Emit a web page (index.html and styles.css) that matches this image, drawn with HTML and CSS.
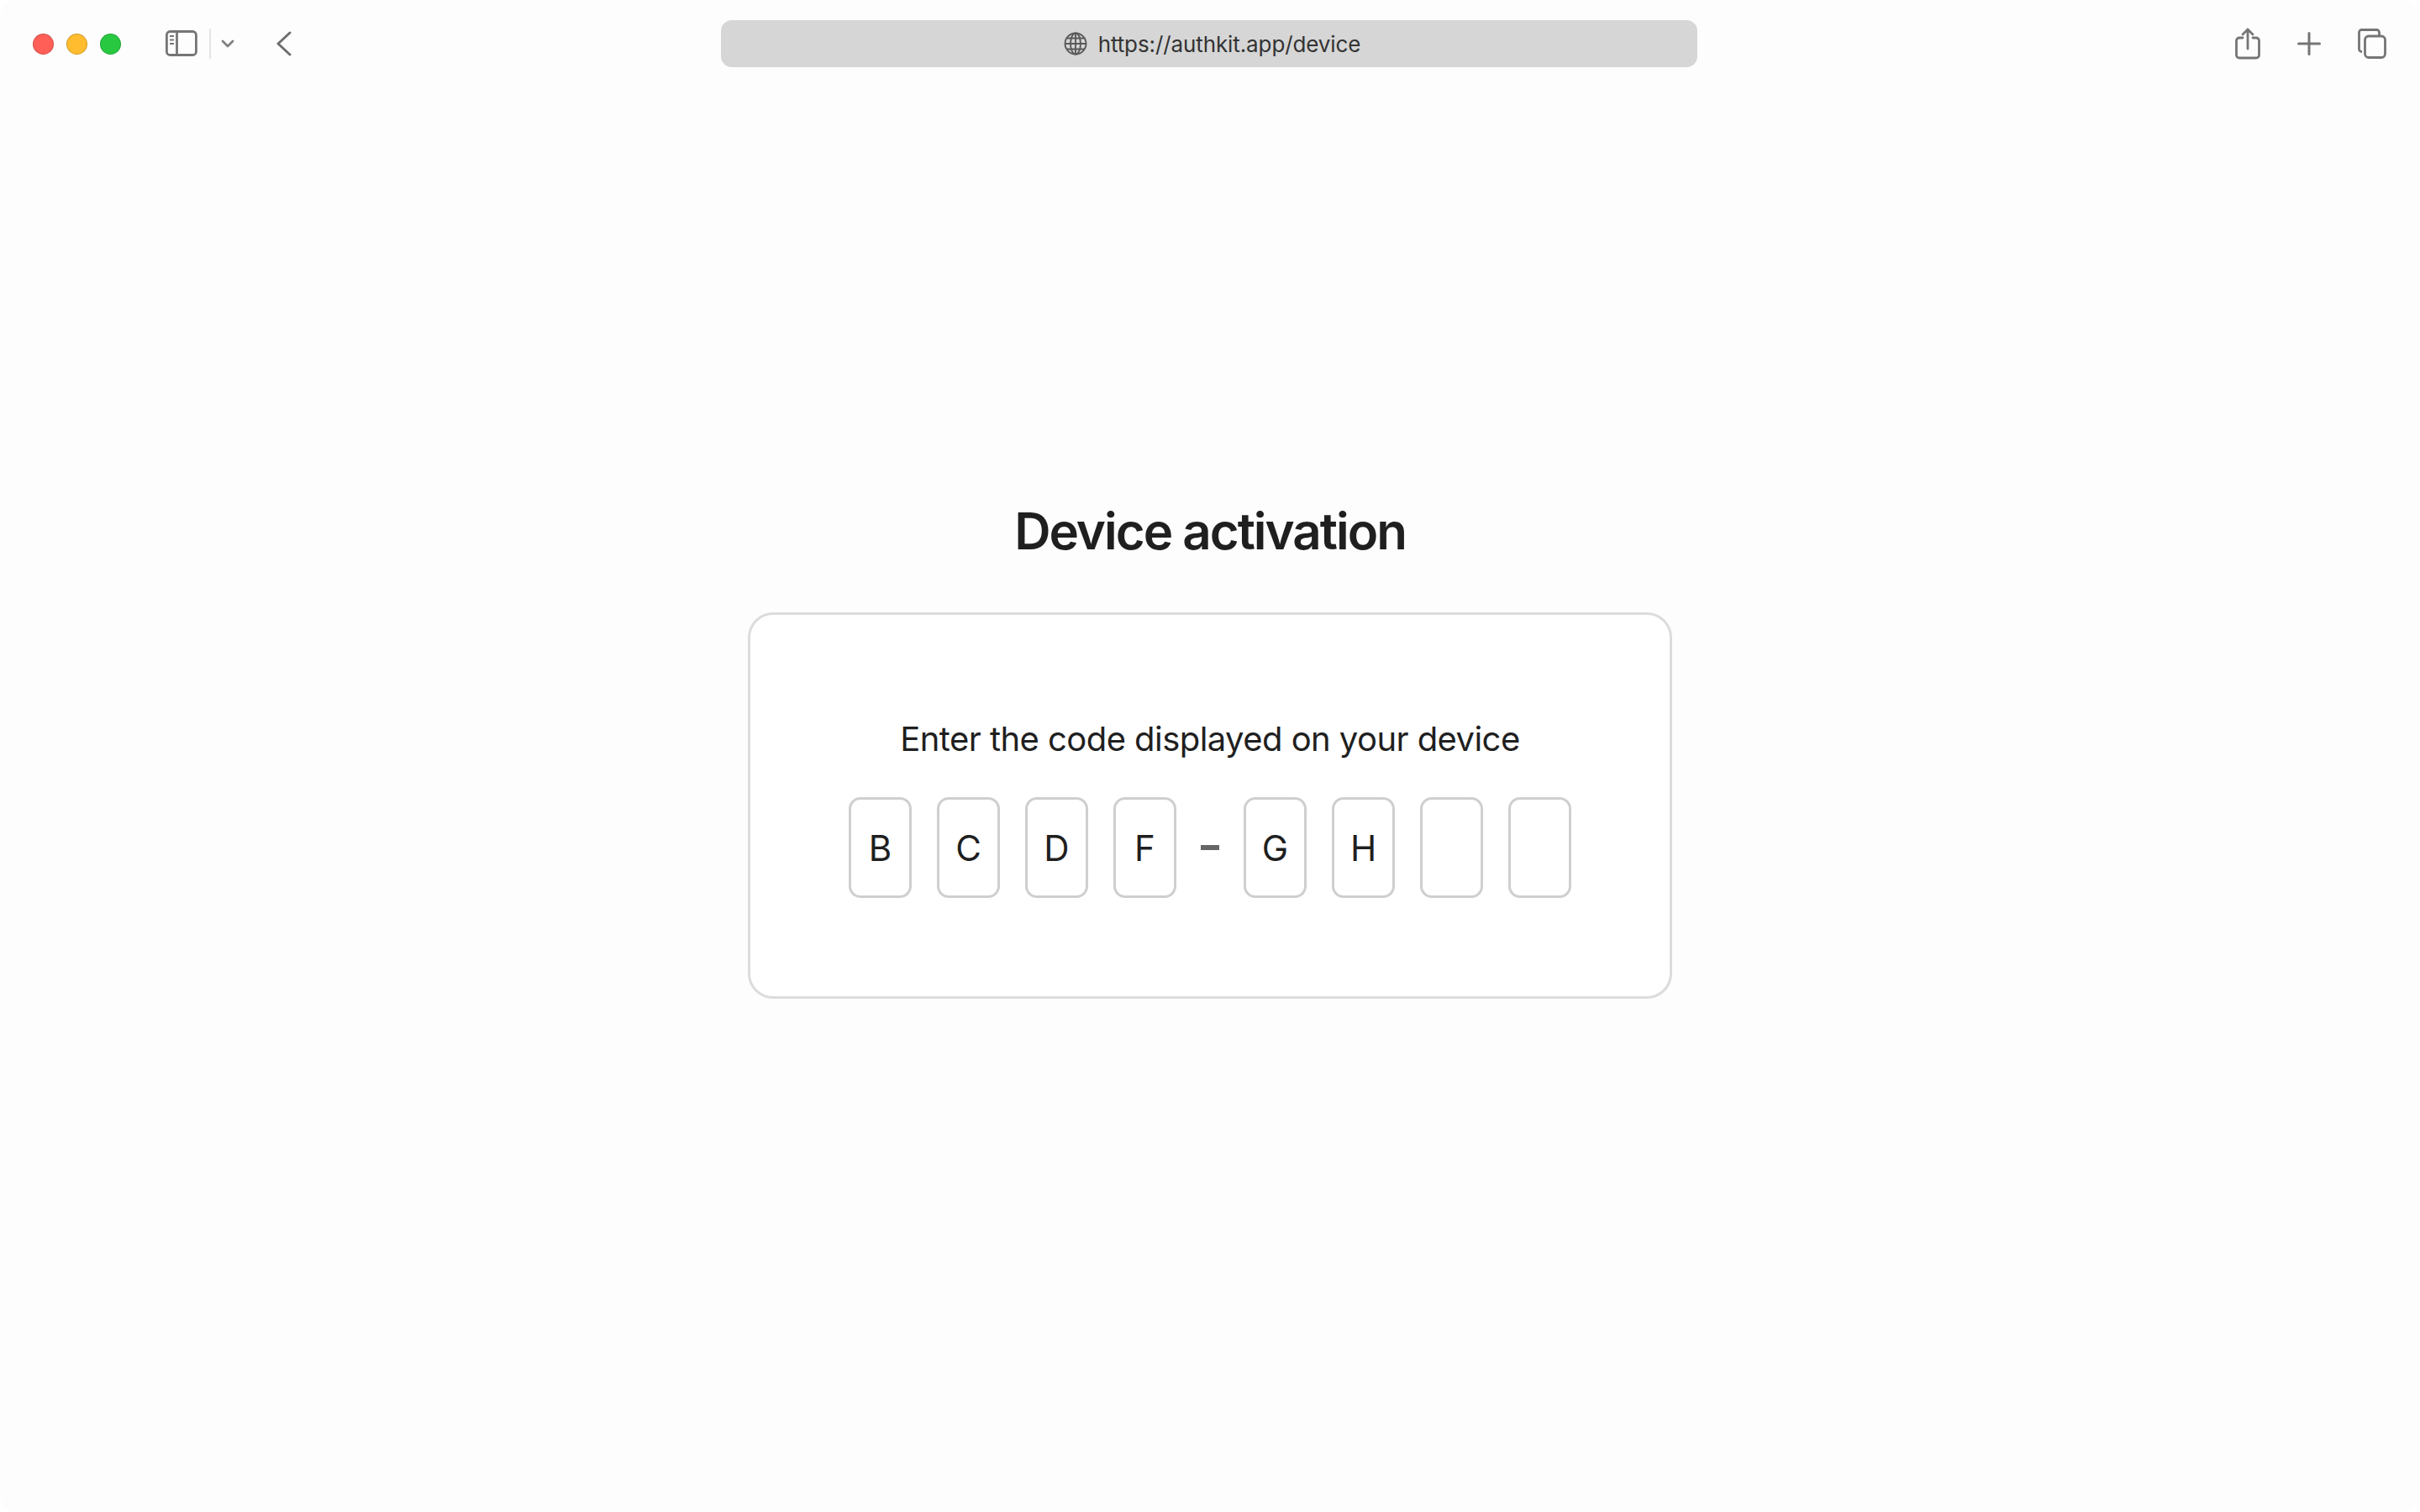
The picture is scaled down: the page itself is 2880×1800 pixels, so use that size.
FILE: index.html
```html
<!DOCTYPE html>
<html lang="en">
<head>
    <meta charset="UTF-8">
    <meta name="viewport" content="width=device-width, initial-scale=1.0">
    <title>Device activation</title>
    <link rel="stylesheet" href="styles.css">
</head>
<body>
    <div class="window">
        <header class="toolbar">
            <div class="toolbar-left">
                <div class="traffic-lights">
                    <span class="light light-close"></span>
                    <span class="light light-min"></span>
                    <span class="light light-max"></span>
                </div>
                <svg class="icon-sidebar" width="38" height="32" viewBox="0 0 38 32" fill="none" stroke="#757575" stroke-width="2.8">
                    <rect x="1.4" y="1.5" width="35" height="28" rx="4"/>
                    <path d="M13.500 1.500v28"/>
                    <path d="M5 7h5M5 11.500h5M5 16h5" stroke-width="2"/>
                </svg>
                <span class="toolbar-divider"></span>
                <svg class="icon-chevron" width="16" height="10" viewBox="0 0 16 10" fill="none" stroke="#808080" stroke-width="2.8" stroke-linecap="round" stroke-linejoin="round">
                    <path d="M2 2l6 6 6-6"/>
                </svg>
                <svg class="icon-back" width="18" height="30" viewBox="0 0 18 30" fill="none" stroke="#6e6e6e" stroke-width="3" stroke-linecap="round" stroke-linejoin="round">
                    <path d="M16 2L2 15l14 13"/>
                </svg>
            </div>
            <div class="url-bar">
                <svg class="icon-globe" width="28" height="28" viewBox="0 0 28 28" fill="none" stroke="#5a5a5a" stroke-width="1.9">
                    <circle cx="14" cy="14" r="12.500"/>
                    <ellipse cx="14" cy="14" rx="6" ry="12.500"/>
                    <path d="M14 1.500v25M1.500 14h25M3.500 7.500h21M3.500 20.500h21"/>
                </svg>
                <span class="url-text">https://authkit.app/device</span>
            </div>
            <div class="toolbar-right">
                <svg class="icon-share" width="30" height="38" viewBox="0 0 30 38" fill="none" stroke="#757575" stroke-width="2.8" stroke-linecap="round" stroke-linejoin="round">
                    <path d="M9 12H5a3.500 3.500 0 0 0-3.500 3.500v17A3.500 3.500 0 0 0 5 36h20a3.500 3.500 0 0 0 3.500-3.500v-17A3.500 3.500 0 0 0 25 12h-4"/>
                    <path d="M15 25V2M9 8l6-6 6 6"/>
                </svg>
                <svg class="icon-plus" width="28" height="28" viewBox="0 0 28 28" fill="none" stroke="#757575" stroke-width="3" stroke-linecap="round">
                    <path d="M14 1.500v25M1.500 14h25"/>
                </svg>
                <svg class="icon-tabs" width="34" height="36" viewBox="0 0 34 36" fill="none" stroke="#757575" stroke-width="2.8">
                    <path d="M5 27.500h-0.500a3 3 0 0 1-3-3V4.500a3 3 0 0 1 3-3h18a3 3 0 0 1 3 3V8"/>
                    <rect x="8.500" y="9" width="24" height="25.500" rx="4.500"/>
                </svg>
            </div>
        </header>

        <main class="content">
            <h1 class="title">Device activation</h1>
            <div class="card">
                <p class="prompt">Enter the code displayed on your device</p>
                <div class="code-row">
                    <div class="code-group">
                        <span class="code-cell">B</span>
                        <span class="code-cell">C</span>
                        <span class="code-cell">D</span>
                        <span class="code-cell">F</span>
                    </div>
                    <span class="code-dash"></span>
                    <div class="code-group">
                        <span class="code-cell">G</span>
                        <span class="code-cell">H</span>
                        <span class="code-cell"></span>
                        <span class="code-cell"></span>
                    </div>
                </div>
            </div>
        </main>
    </div>
</body>
</html>
```
FILE: styles.css
```css
html, body {
    margin: 0;
    padding: 0;
    height: 100%;
    overflow: hidden;
    background-color: #ffffff;
    font-family: "Inter", "Liberation Sans", sans-serif;
}

.window {
    height: 100%;
    background-color: #fdfdfd;
    border-radius: 20px;
}

.toolbar {
    display: grid;
    grid-template-columns: 858px 1162px 1fr;
    height: 104px;
    padding-top: 24px;
    box-sizing: border-box;
}

.toolbar-left {
    display: flex;
    align-items: center;
    height: 56px;
    padding-left: 39px;
}

.traffic-lights {
    display: flex;
    gap: 15px;
    margin-right: 53px;
}

.light {
    width: 25px;
    height: 25px;
    border-radius: 50%;
    box-sizing: border-box;
    border: 1px solid rgba(0, 0, 0, 0.18);
}

.light-close {
    background-color: #ff5f57;
}

.light-min {
    background-color: #febc2e;
}

.light-max {
    background-color: #28c840;
}

.toolbar-divider {
    width: 2px;
    height: 36px;
    margin: 0 12px 0 14px;
    background-color: #e6e6e6;
}

.icon-back {
    margin-left: 50px;
}

.url-bar {
    display: flex;
    align-items: center;
    justify-content: center;
    gap: 13px;
    height: 56px;
    padding-left: 7px;
    background-color: #d6d6d6;
    border-radius: 13px;
}

.url-text {
    font-size: 26px;
    letter-spacing: -0.1px;
    color: #333333;
}

.toolbar-right {
    display: flex;
    align-items: center;
    height: 56px;
    padding-left: 640px;
}

.icon-plus {
    margin-left: 44px;
}

.icon-tabs {
    margin-left: 44px;
}

.content {
    display: flex;
    flex-direction: column;
    align-items: center;
    padding-top: 492px;
}

.title {
    margin: 0 0 61px;
    font-size: 60px;
    line-height: 72px;
    font-weight: 600;
    letter-spacing: -2px;
    color: #1f1f1f;
}

.card {
    display: flex;
    flex-direction: column;
    align-items: center;
    width: 1100px;
    height: 460px;
    box-sizing: border-box;
    padding-top: 118px;
    background-color: #ffffff;
    border: 3px solid #dcdcdc;
    border-radius: 30px;
}

.prompt {
    margin: 0 0 39px;
    font-size: 40px;
    line-height: 60px;
    letter-spacing: -0.56px;
    color: #1f1f1f;
}

.code-row {
    display: flex;
    align-items: center;
    gap: 30px;
}

.code-group {
    display: flex;
    gap: 30px;
}

.code-cell {
    display: flex;
    align-items: center;
    justify-content: center;
    width: 75px;
    height: 120px;
    box-sizing: border-box;
    border: 3px solid #cfcfcf;
    border-radius: 14px;
    font-size: 42px;
    color: #1f1f1f;
}

.code-dash {
    width: 22px;
    height: 6px;
    margin: 0 -1px;
    background-color: #666666;
}
```
